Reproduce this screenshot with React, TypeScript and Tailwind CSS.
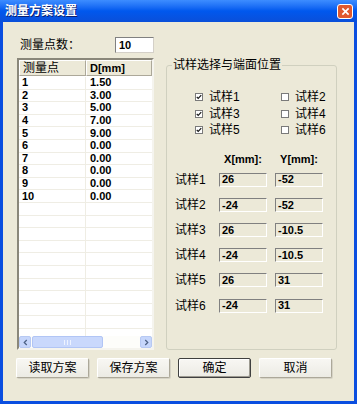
import React from "react";

const FONT = { fontFamily: '"Liberation Sans", "Noto Sans CJK SC", sans-serif' };

const points = [
	["1", "1.50"],
	["2", "3.00"],
	["3", "5.00"],
	["4", "7.00"],
	["5", "9.00"],
	["6", "0.00"],
	["7", "0.00"],
	["8", "0.00"],
	["9", "0.00"],
	["10", "0.00"],
];

const samples = [
	{ name: "试样1", x: "26", y: "-52" },
	{ name: "试样2", x: "-24", y: "-52" },
	{ name: "试样3", x: "26", y: "-10.5" },
	{ name: "试样4", x: "-24", y: "-10.5" },
	{ name: "试样5", x: "26", y: "31" },
	{ name: "试样6", x: "-24", y: "31" },
];

const picks = [
	[
		{ name: "试样1", on: true },
		{ name: "试样2", on: false },
	],
	[
		{ name: "试样3", on: true },
		{ name: "试样4", on: false },
	],
	[
		{ name: "试样5", on: true },
		{ name: "试样6", on: false },
	],
];

const Check = ({ on, name }: { on: boolean; name: string }) => (
	<div className="flex items-center">
		<span className="flex h-[8px] w-[8px] items-center justify-center border border-[#7a7a7a] bg-white">
			{on && (
				<svg viewBox="0 0 8 8" className="h-[6px] w-[6px]">
					<path d="M1 4 L3 6 L7 1.5" stroke="#1a1a1a" strokeWidth="1.6" fill="none" />
				</svg>
			)}
		</span>
		<span className="ml-[6px] text-[12px] leading-[12px]">{name}</span>
	</div>
);

const Arrow = ({ dir }: { dir: "l" | "r" }) => (
	<div className="flex h-[12px] w-[12px] items-center justify-center rounded-[2px] border border-[#b7c9f3] bg-[#c6d6fb]">
		<svg viewBox="0 0 6 8" className="h-[7px] w-[5px]">
			<path
				d={dir === "l" ? "M4.5 1 L1.5 4 L4.5 7" : "M1.5 1 L4.5 4 L1.5 7"}
				stroke="#4d6185"
				strokeWidth="1.5"
				fill="none"
			/>
		</svg>
	</div>
);

const Btn = ({ label, main }: { label: string; main?: boolean }) => (
	<button
		className={
			"flex h-[20px] w-[73px] items-center justify-center rounded-[2px] bg-linear-to-b from-[#f8f7f3] to-[#ecebe4] text-[12px] leading-none text-black " +
			(main
				? "border border-[#404040] shadow-[inset_-1px_-1px_0_#9c9a90,inset_1px_1px_0_#ffffff]"
				: "border border-t-[#ffffff] border-l-[#ffffff] border-r-[#aca899] border-b-[#aca899] shadow-[1px_1px_0_#d6d3c6]")
		}
	>
		{label}
	</button>
);

export default function App() {
	return (
		<div className="flex h-[404px] w-[357px] flex-col bg-[#0a4ee0]" style={FONT}>
			{/* title bar */}
			<div className="flex h-[22px] shrink-0 items-center justify-between bg-linear-to-b from-[#3d8dff] via-[#0058ee] to-[#0a4fd9] pl-[5px] pr-[4px]">
				<span className="text-[12px] font-bold leading-none text-white [text-shadow:1px_1px_0_#0a1e6e]">测量方案设置</span>
				<div className="flex h-[15px] w-[16px] items-center justify-center rounded-[3px] border border-white bg-[#e0582e]">
					<svg viewBox="0 0 10 10" className="h-[9px] w-[9px]">
						<path d="M1.5 1.5 L8.5 8.5 M8.5 1.5 L1.5 8.5" stroke="#fff" strokeWidth="1.8" />
					</svg>
				</div>
			</div>

			{/* client */}
			<div className="mx-[3px] mb-[3px] flex flex-1 flex-col bg-[#ece9d8] text-black">
				<div className="mt-[15px] flex h-[16px] items-center">
					<span className="ml-[17px] w-[95px] text-[12px]">测量点数：</span>
					<div className="flex h-[16px] w-[39px] items-center border border-t-[#808080] border-l-[#808080] border-r-[#d4d0c8] border-b-[#d4d0c8] bg-white pl-[3px] text-[11px] font-bold">
						10
					</div>
				</div>

				<div className="mt-[5px] flex h-[292px]">
					{/* list */}
					<div className="ml-[14px] flex w-[137px] flex-col border-2 border-t-[#8a877a] border-l-[#8a877a] border-r-[#f5f4ee] border-b-[#f5f4ee] bg-white">
						<div className="flex h-[16px] shrink-0 bg-[#ece9d8] text-[11px]">
							<div className="flex w-[67px] items-center border border-t-[#ffffff] border-l-[#ffffff] border-r-[#aca899] border-b-[#aca899] pl-[3px]">
								<span className="text-[12px]">测量点</span>
							</div>
							<div className="flex flex-1 items-center border border-t-[#ffffff] border-l-[#ffffff] border-r-[#aca899] border-b-[#aca899] pl-[3px] font-bold">
								D[mm]
							</div>
						</div>
						<div className="flex-1 overflow-hidden pt-[1px]">
							{Array.from({ length: 21 }).map((_, i) => (
								<div key={i} className="flex h-[12.6px] border-b border-[#efede4] text-[11px] font-bold leading-none">
									<div className="flex w-[67px] items-center border-r border-[#efede4] pl-[3px]">{points[i]?.[0]}</div>
									<div className="flex flex-1 items-center pl-[4px]">{points[i]?.[1]}</div>
								</div>
							))}
						</div>
						<div className="flex h-[12px] shrink-0 items-center bg-[#fdfdfa]">
							<Arrow dir="l" />
							<div className="ml-[1px] flex h-[12px] w-[71px] items-center justify-center rounded-[2px] border border-[#b1c5f5] bg-[#c9d8fc]">
								<svg viewBox="0 0 7 5" className="h-[5px] w-[7px]">
									<path d="M0.5 0 V5 M3.5 0 V5 M6.5 0 V5" stroke="#eef3ff" strokeWidth="1" />
								</svg>
							</div>
							<div className="flex-1" />
							<Arrow dir="r" />
						</div>
					</div>

					{/* group box */}
					<fieldset className="ml-[12px] mt-[1px] h-[291px] w-[171px] rounded-[3px] border border-[#d0d0bf] p-0">
						<legend className="ml-[5px] px-[1px] text-[12px] leading-[12px]">试样选择与端面位置</legend>
						<div className="mt-[18px] flex flex-col">
							{picks.map((row, i) => (
								<div key={i} className="flex h-[16.5px] items-center">
									<div className="ml-[28px] w-[86px]">
										<Check on={row[0].on} name={row[0].name} />
									</div>
									<Check on={row[1].on} name={row[1].name} />
								</div>
							))}
						</div>
						<div className="mt-[15px] flex h-[12px] items-center text-[11px] font-bold leading-none">
							<span className="ml-[52px] w-[48px] text-center">X[mm]:</span>
							<span className="ml-[8px] w-[48px] text-center">Y[mm]:</span>
						</div>
						<div className="mt-[1.5px] flex flex-col">
							{samples.map(s => (
								<div key={s.name} className="flex h-[25.2px] items-center">
									<span className="ml-[8px] w-[44px] text-[12px]">{s.name}</span>
									<div className="flex h-[14px] w-[48px] items-center border border-t-[#808080] border-l-[#808080] border-r-[#ffffff] border-b-[#ffffff] pl-[2px] text-[11px] font-bold">
										{s.x}
									</div>
									<div className="ml-[8px] flex h-[14px] w-[48px] items-center border border-t-[#808080] border-l-[#808080] border-r-[#ffffff] border-b-[#ffffff] pl-[2px] text-[11px] font-bold">
										{s.y}
									</div>
								</div>
							))}
						</div>
					</fieldset>
				</div>

				<div className="ml-[13px] mt-[8px] flex gap-[8px]">
					<Btn label="读取方案" />
					<Btn label="保存方案" />
					<Btn label="确定" main />
					<Btn label="取消" />
				</div>
			</div>
		</div>
	);
}
